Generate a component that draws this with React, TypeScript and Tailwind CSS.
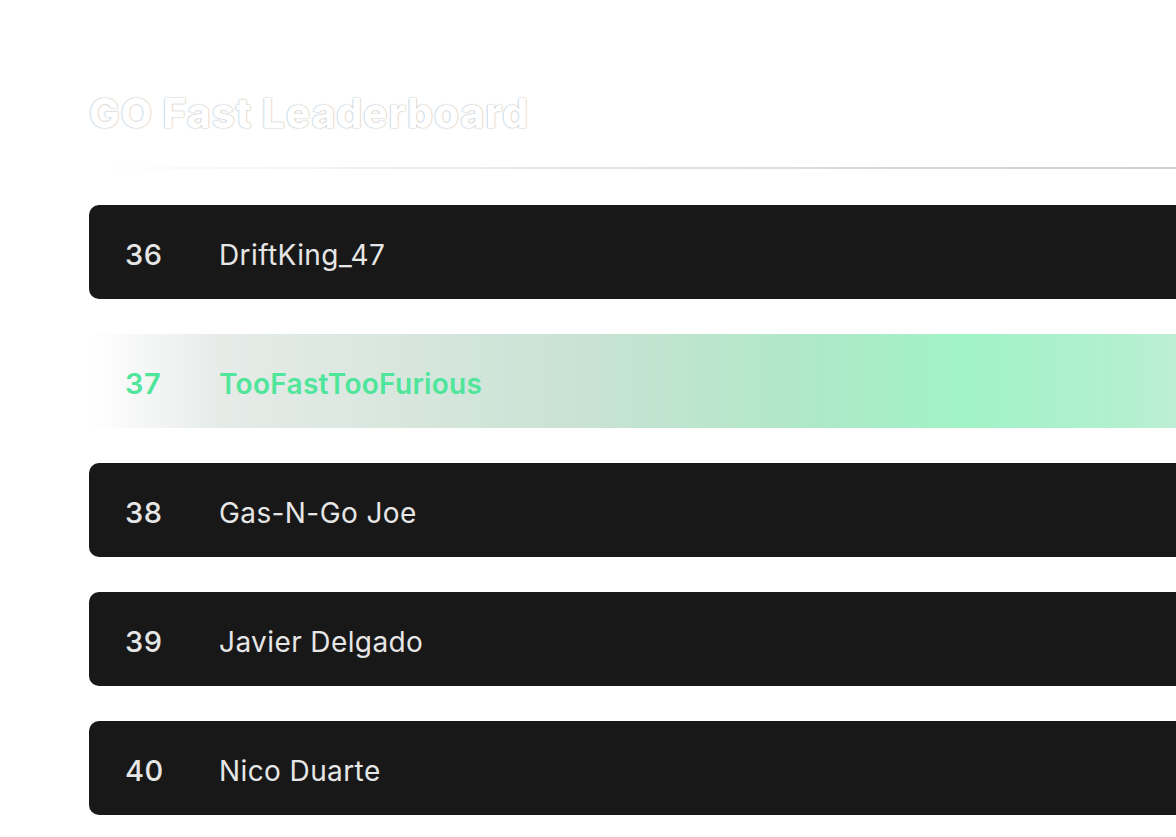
const rows = [
  { rank: 36, name: 'DriftKing_47' },
  { rank: 37, name: 'TooFastTooFurious', me: true },
  { rank: 38, name: 'Gas-N-Go Joe' },
  { rank: 39, name: 'Javier Delgado' },
  { rank: 40, name: 'Nico Duarte' },
];

export default function App() {
  return (
    <div className="min-h-[837px] w-[1176px] overflow-hidden bg-white font-['Inter',sans-serif]">
      <div className="pl-[89px] pt-[88px]">
        <h1 className="text-[41px] font-extrabold leading-[50px] tracking-[0.7px] text-white [text-shadow:0_0_1.5px_rgba(0,0,0,0.45)]">
          GO Fast Leaderboard
        </h1>
        <div className="mt-[29px] h-[2px] bg-gradient-to-r from-transparent via-[#e2e2e2] to-[#cfcfcf]" />
        <div className="mt-[36px] flex w-[1120px] flex-col gap-[35px]">
          {rows.map((r) => (
            <Row key={r.rank} {...r} />
          ))}
        </div>
      </div>
    </div>
  );
}

function Row({ rank, name, me }: { rank: number; name: string; me?: boolean }) {
  if (me) {
    return (
      <div className="flex h-[94px] items-center pt-[6px] bg-[linear-gradient(90deg,rgba(255,255,255,1)_0%,#e6ebe8_12%,#c8e2d3_45%,#aee9c7_65%,#a1f3c6_78%,#b2f0cf_92%,#c2eed8_100%)]">
        <span className="w-[130px] pl-[36px] text-[29px] font-semibold tracking-[0.5px] text-[#4fe59a]">{rank}</span>
        <span className="text-[28px] font-semibold tracking-[0.3px] text-[#4fe59a]">{name}</span>
      </div>
    );
  }
  return (
    <div className="flex h-[94px] items-center pt-[6px] rounded-[10px] bg-[#181818]">
      <span className="w-[130px] pl-[36px] text-[29px] font-medium tracking-[0.5px] text-[#e6e6e6]">{rank}</span>
      <span className="text-[28px] font-normal tracking-[0.4px] text-[#e6e6e6]">{name}</span>
    </div>
  );
}
